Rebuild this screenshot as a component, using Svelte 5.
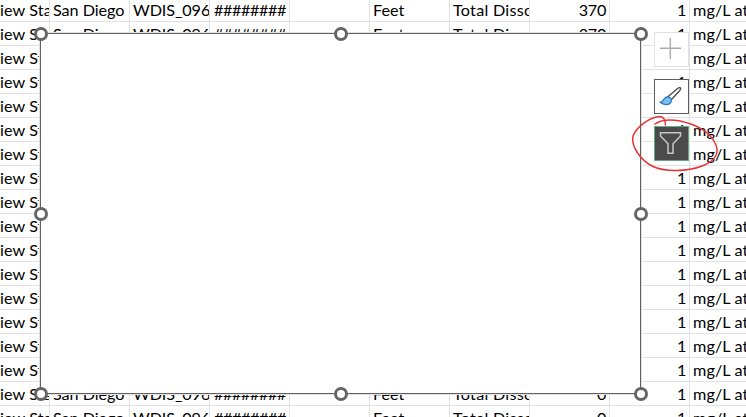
<script>
  const rows = Array.from({ length: 18 }, (_, i) => ({
    cells: [
      { text: 'iew Sta', kind: 'station' },
      { text: 'San Diego', kind: 'city' },
      { text: 'WDIS_096', kind: 'code' },
      { text: '########', kind: 'hash' },
      { text: '', kind: '' },
      { text: 'Feet', kind: 'unit' },
      { text: 'Total Disso', kind: 'total' },
      { text: i > 14 ? '0' : '370', kind: 'number' },
      { text: '1', kind: 'number' },
      { text: 'mg/L at', kind: 'measure' }
    ]
  }));
  const handles = [[0, 0], [50, 0], [100, 0], [0, 50], [100, 50], [0, 100], [50, 100], [100, 100]];
</script>

<main>
  <div class="sheet">
    {#each rows as row}
      <div class="row">
        {#each row.cells as cell}
          <div class="cell {cell.kind}"><span>{cell.text}</span></div>
        {/each}
      </div>
    {/each}
  </div>

  <div class="chart"></div>
  <div class="handles">
    {#each handles as [x, y]}
      <i class="handle" style="left:{x}%;top:{y}%"></i>
    {/each}
  </div>

  <div class="tools">
    <button class="add" aria-label="Chart elements">
      <svg viewBox="0 0 33 33"><path d="M15.3 5v21M5 15.3h21" fill="none" stroke="#ababab" stroke-width="1.4" /></svg>
    </button>
    <button class="brush" aria-label="Chart styles">
      <svg viewBox="0 0 33 33">
        <path d="M12.8 16.7 22.5 8.5Q25.2 6.8 25.7 8.2Q25.8 9.2 24.4 11L16.2 19.8Z" fill="#fff" stroke="#4b4b4b" stroke-width="1.3" />
        <path d="M5.2 22.3C8.7 22 8.3 18.1 11.3 17.1C14.4 16.2 17.2 18.6 16.3 21.2C14.8 25.6 8.6 25.3 5.2 22.3Z" fill="#83beec" stroke="#1979ca" stroke-width="1.2" />
      </svg>
    </button>
    <button class="filter" aria-label="Chart filters">
      <svg viewBox="0 0 33 33"><path d="M5.5 5.7h20v3.2l-7.5 7.9v9.5h-5v-9.5l-7.5-7.9Z" fill="none" stroke="#c8c8c8" stroke-width="1.5" /></svg>
    </button>
  </div>

  <svg class="ink" viewBox="0 0 746 417">
    <path d="M665.5 125.5C665.5 119 663.5 116.5 659 116.5C650 117.5 637 126 633 136C630.5 147 642 161 652 166C665 172.5 688 171.5 702 166C716 161 720 152 715 143C709 131 694 124 680 121C668 119 660 120 654.5 124.5" />
  </svg>
</main>

<style>
  :global(body) { margin: 0; overflow: hidden; }
  main { position: relative; width: 746px; height: 417px; overflow: hidden; background: #fff; }
  .sheet { margin-top: -2px; font: 16.2px/24px Lato, "Open Sans", sans-serif; color: #000; }
  .row { display: grid; grid-template-columns: 50px repeat(8, 80px) 56px; height: 24px; }
  .cell { box-sizing: border-box; height: 24px; border-right: 1px solid #e1e1e1; border-bottom: 1px solid #e1e1e1; padding-left: 3px; overflow: hidden; white-space: nowrap; }
  .station { padding-left: 0; letter-spacing: .1px; }
  .city { letter-spacing: -.05px; }
  .code { letter-spacing: -.1px; }
  .hash { padding-left: 4px; letter-spacing: -.4px; }
  .total { letter-spacing: .25px; }
  .number { text-align: right; padding-right: 3px; letter-spacing: -.3px; }
  .measure { border-right: 0; letter-spacing: .1px; }
  .chart { position: absolute; left: 40px; top: 33px; width: 599px; height: 359px; border: 1px solid #626262; background: #fff; box-shadow: 0 0 0 1px #e1e1e1; }
  .handles { position: absolute; left: 41px; top: 34px; width: 600px; height: 360px; }
  .handle { position: absolute; box-sizing: border-box; width: 14px; height: 14px; margin: -7px; border: 3px solid #656565; border-radius: 50%; background: #fff; }
  .tools { position: absolute; left: 654px; top: 32px; display: flex; flex-direction: column; gap: 12px; }
  button { display: block; box-sizing: border-box; width: 35px; height: 35px; padding: 0; border: 1px solid #e1e1e1; background: #fff; }
  button svg { display: block; width: 33px; height: 33px; }
  .brush { border-color: #5c5c5c; }
  .filter { border-color: #65a981; background: #4b4b4b; }
  .ink { position: absolute; inset: 0; width: 746px; height: 417px; fill: none; stroke: #e53237; stroke-width: 1.5; pointer-events: none; }
</style>
